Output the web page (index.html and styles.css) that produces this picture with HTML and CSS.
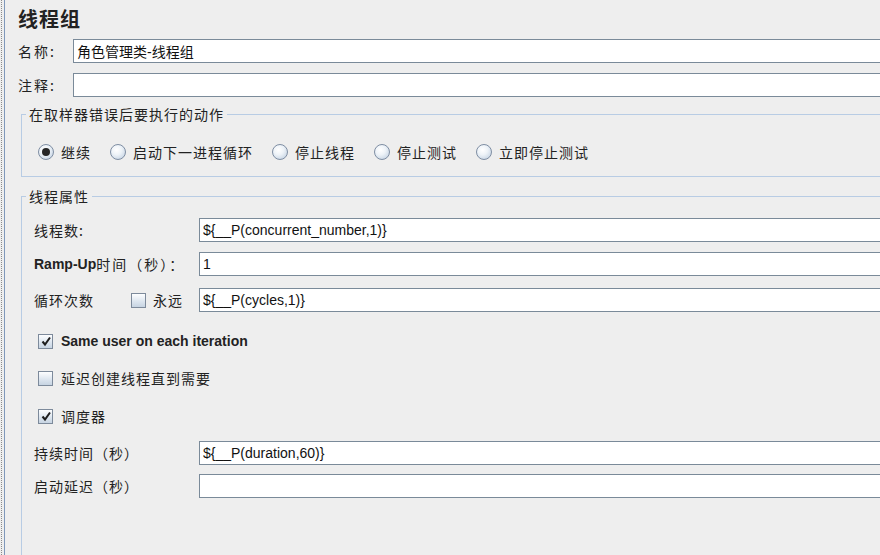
FILE: index.html
```html
<!DOCTYPE html>
<html lang="zh-CN">
<head>
    <meta charset="UTF-8">
    <meta name="viewport" content="width=device-width, initial-scale=1.0">
    <title>线程组</title>
    <link rel="stylesheet" href="styles.css">
</head>
<body>
    <div class="panel">
        <div class="inner">
            <h2 class="title">线程组</h2>

            <div class="field first">
                <label class="lbl">名称:</label>
                <input type="text" class="txt" value="角色管理类-线程组">
            </div>
            <div class="field">
                <label class="lbl">注释:</label>
                <input type="text" class="txt" value="">
            </div>

            <fieldset class="group errors">
                <legend>在取样器错误后要执行的动作</legend>
                <div class="radios">
                    <span class="opt"><span class="radio on"></span>继续</span>
                    <span class="opt"><span class="radio"></span>启动下一进程循环</span>
                    <span class="opt"><span class="radio"></span>停止线程</span>
                    <span class="opt"><span class="radio"></span>停止测试</span>
                    <span class="opt"><span class="radio"></span>立即停止测试</span>
                </div>
            </fieldset>

            <fieldset class="group props">
                <legend>线程属性</legend>

                <div class="prow r1">
                    <label class="plbl">线程数:</label>
                    <input type="text" class="txt" value="${__P(concurrent_number,1)}">
                </div>
                <div class="prow r2">
                    <label class="plbl"><b>Ramp-Up</b><span class="wide">时间（秒）：</span></label>
                    <input type="text" class="txt" value="1">
                </div>
                <div class="prow r3">
                    <label class="plbl">循环次数
                        <span class="cb-inline"><span class="check"></span>永远</span>
                    </label>
                    <input type="text" class="txt" value="${__P(cycles,1)}">
                </div>

                <div class="crow c1">
                    <span class="check on"><svg width="12" height="12" viewBox="0 0 12 12"><path d="M2.5 6.5 L5 9.5 L10 2.5" fill="none" stroke="#1e1e1e" stroke-width="2"/></svg></span>
                    <span class="en">Same user on each iteration</span>
                </div>
                <div class="crow c2">
                    <span class="check"></span>
                    <span>延迟创建线程直到需要</span>
                </div>
                <div class="crow c3">
                    <span class="check on"><svg width="12" height="12" viewBox="0 0 12 12"><path d="M2.5 6.5 L5 9.5 L10 2.5" fill="none" stroke="#1e1e1e" stroke-width="2"/></svg></span>
                    <span>调度器</span>
                </div>

                <div class="prow r4">
                    <label class="plbl">持续时间（秒）</label>
                    <input type="text" class="txt" value="${__P(duration,60)}">
                </div>
                <div class="prow r5">
                    <label class="plbl">启动延迟（秒）</label>
                    <input type="text" class="txt" value="">
                </div>
            </fieldset>
        </div>
    </div>
</body>
</html>
```

FILE: styles.css
```css
html, body {
    margin: 0;
    height: 100%;
    overflow: hidden;
    background: #eeeeee;
}
body {
    font-family: "Noto Sans CJK SC", "Liberation Sans", sans-serif;
    font-size: 14px;
    color: #222;
}
.panel {
    margin-left: 1px;
    border-left: 1px dotted #8c8c8c;
    height: 100%;
}
.inner {
    margin-left: 2px;
    margin-right: -30px;
    border-left: 1px solid #7f98ba;
    padding: 7px 0 0 13px;
    height: 100%;
    box-sizing: border-box;
}
.title {
    margin: 0;
    font-size: 20px;
    line-height: 24px;
    font-weight: bold;
    letter-spacing: 1px;
}

/* top name / comment rows */
.field {
    display: flex;
    align-items: center;
    height: 24px;
    margin-top: 10px;
}
.field.first {
    margin-top: 8px;
}
.lbl {
    width: 55px;
    letter-spacing: 2px;
}
.txt {
    flex: 1;
    box-sizing: border-box;
    height: 24px;
    margin: 0;
    padding: 0 3px;
    border: 1px solid #7a8a99;
    background: #fff;
    font-family: "Liberation Sans", "Noto Sans CJK SC", sans-serif;
    font-size: 14px;
    color: #111;
    outline: none;
}

/* group boxes */
.group {
    margin: 0 0 0 3px;
    border: 1px solid #b8cce4;
    padding: 0 0 0 12px;
}
.group legend {
    margin-left: -8px;
    padding: 0 3px;
    line-height: 20px;
    letter-spacing: 1px;
}
.errors {
    margin-top: 7px;
    padding: 18px 0 14px 16px;
}
.errors legend {
    margin-left: -12px;
}
.props {
    margin-top: 9px;
    padding-top: 12px;
    min-height: 400px;
}

/* radio buttons */
.radios {
    display: flex;
    align-items: center;
    height: 20px;
    gap: 19px;
}
.opt {
    display: inline-flex;
    align-items: center;
    gap: 7px;
    letter-spacing: 1px;
}
.radio {
    display: inline-flex;
    align-items: center;
    justify-content: center;
    width: 14px;
    height: 14px;
    border-radius: 50%;
    border: 1px solid #7f8ea3;
    background: radial-gradient(circle at 40% 35%, #ffffff 0%, #eef3f8 40%, #b9cadd 100%);
}
.radio.on::after {
    content: "";
    width: 8px;
    height: 8px;
    border-radius: 50%;
    background: #262626;
}

/* thread properties */
.prow {
    display: flex;
    align-items: center;
    height: 24px;
}
.plbl {
    display: flex;
    align-items: center;
    width: 165px;
    letter-spacing: 1px;
}
.plbl b {
    font-family: "Liberation Sans", sans-serif;
    letter-spacing: 0;
}
.plbl .wide {
    letter-spacing: 2px;
}
.r2 { margin-top: 10px; }
.r3 { margin-top: 12px; }
.r4 { margin-top: 13px; }
.r5 { margin-top: 9px; }

.cb-inline {
    display: inline-flex;
    align-items: center;
    gap: 7px;
    margin-left: 37px;
}
.crow {
    display: flex;
    align-items: center;
    gap: 8px;
    height: 24px;
    padding-left: 4px;
    letter-spacing: 1px;
}
.c1 { margin-top: 17px; }
.c2 { margin-top: 13px; }
.c3 { margin-top: 14px; }
.crow .en {
    font-family: "Liberation Sans", sans-serif;
    font-weight: bold;
    letter-spacing: 0;
}
.check {
    display: inline-flex;
    align-items: center;
    justify-content: center;
    width: 15px;
    height: 15px;
    box-sizing: border-box;
    border: 1px solid #7d8a9b;
    background: linear-gradient(#fdfeff, #dbe4ee 60%, #c7d4e2);
}
```
